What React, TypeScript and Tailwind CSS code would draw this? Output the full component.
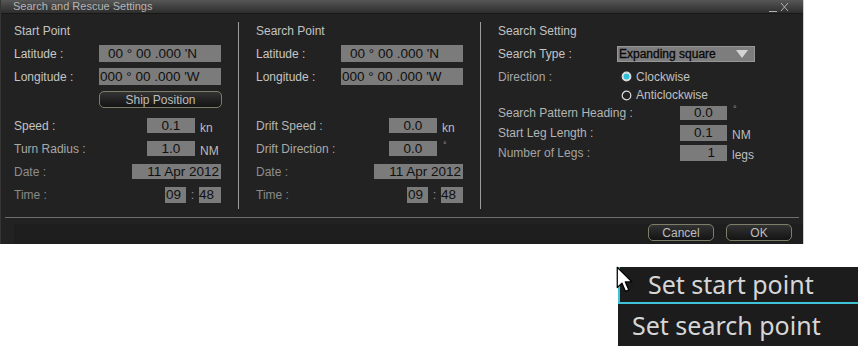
import React from "react";

const box = "bg-[#7b7b7b] text-[#101010] text-[13.5px] leading-none flex items-center";
const lbl = "text-[12px] leading-none whitespace-nowrap";

function Row({ h, children, cls = "" }: { h: string; children: React.ReactNode; cls?: string }) {
  return <div className={`flex items-center ${h} ${cls}`}>{children}</div>;
}

function Btn({ w, children }: { w: string; children: React.ReactNode }) {
  return (
    <div
      className={`${w} h-[17px] rounded-[5px] border border-[#7e7e68] bg-gradient-to-b from-[#333333] to-[#141414] flex items-center justify-center text-[12px] leading-none text-[#bdbdbd]`}
    >
      {children}
    </div>
  );
}

function PointColumn({
  title,
  showShip,
  r1,
  r2,
}: {
  title: string;
  showShip: boolean;
  r1: [string, string, string, string];
  r2: [string, string, string, string];
}) {
  return (
    <div className="flex flex-col pt-[9px]">
      <div className={`${lbl} h-[16px] flex items-center text-[#c2c2c2]`}>{title}</div>
      <div className="mt-[3px]">
        <Row h="h-[23px]">
          <div className={`${lbl} w-[85px] text-[#c8c8c8]`}>Latitude :</div>
          <div className={`${box} w-[122px] h-[17px] pl-[9px]`}>00 ° 00 .000 'N</div>
        </Row>
        <Row h="h-[23px]">
          <div className={`${lbl} w-[85px] text-[#c4c4c4]`}>Longitude :</div>
          <div className={`${box} w-[122px] h-[17px] pl-[1px]`}>000 ° 00 .000 'W</div>
        </Row>
        <Row h="h-[23px]">
          <div className="w-[85px]" />
          {showShip ? <Btn w="w-[123px]">Ship Position</Btn> : null}
        </Row>
      </div>
      <div className="mt-[3px]">
        <Row h="h-[23px]">
          <div className={`${lbl} w-[133px] ${r1[3]}`}>{r1[0]}</div>
          <div className={`${box} w-[48px] h-[15px] justify-center`}>{r1[1]}</div>
          <div className={`${lbl} ml-[5px] mt-[4px] text-[#bdbdbd]`}>{r1[2]}</div>
        </Row>
        <Row h="h-[23px]">
          <div className={`${lbl} w-[133px] ${r2[3]}`}>{r2[0]}</div>
          <div className={`${box} w-[48px] h-[15px] justify-center`}>{r2[1]}</div>
          {r2[2] === "°" ? (
            <div className="ml-[6px] mb-[6px] text-[9px] leading-none text-[#9a9a9a]">°</div>
          ) : (
            <div className={`${lbl} ml-[5px] mt-[4px] text-[#bdbdbd]`}>{r2[2]}</div>
          )}
        </Row>
        <Row h="h-[23px]">
          <div className={`${lbl} w-[118px] text-[#8e8e8e]`}>Date :</div>
          <div className={`${box} w-[89px] h-[15px] justify-end pr-[2px]`}>11 Apr 2012</div>
        </Row>
        <Row h="h-[23px]">
          <div className={`${lbl} w-[151px] text-[#8a8a8a]`}>Time :</div>
          <div className={`${box} w-[21px] h-[16px] pl-[1px]`}>09</div>
          <div className="w-[13px] text-center text-[13px] leading-none text-[#8e8e8e]">:</div>
          <div className={`${box} w-[22px] h-[16px]`}>48</div>
        </Row>
      </div>
    </div>
  );
}

function Radio({ on }: { on: boolean }) {
  return (
    <svg width="11" height="11" viewBox="0 0 11 11" className="shrink-0">
      <circle cx="5.5" cy="5.5" r="4.3" fill={on ? "#e8e8e8" : "none"} stroke="#dcdcdc" strokeWidth="1.2" />
      {on ? <circle cx="5.5" cy="5.5" r="3" fill="#2fc1d6" /> : null}
    </svg>
  );
}

export default function App() {
  return (
    <div className="w-[858px] h-[348px] bg-white overflow-hidden font-['Liberation_Sans',Arial,sans-serif]">
      {/* Dialog */}
      <div className="w-[804px] h-[244px] flex flex-col bg-[#222222] border-r border-[#cfcfcf] border-l border-l-[#353535]">
        {/* Title bar */}
        <div className="h-[14px] shrink-0 flex items-center bg-gradient-to-b from-[#575757] to-[#2d2d2d] border-b border-[#181818]">
          <div className="pl-[12px] text-[11px] leading-none text-[#b4b4b4] whitespace-nowrap">
            Search and Rescue Settings
          </div>
          <div className="ml-auto mr-[8px] flex items-center">
            <svg width="26" height="13" viewBox="0 0 26 13">
              <line x1="0" y1="11.5" x2="8" y2="11.5" stroke="#b0b0b0" strokeWidth="1" />
              <line x1="12" y1="3" x2="19" y2="11" stroke="#b0b0b0" strokeWidth="1" />
              <line x1="19" y1="3" x2="12" y2="11" stroke="#b0b0b0" strokeWidth="1" />
            </svg>
          </div>
        </div>

        {/* Body */}
        <div className="h-[203px] shrink-0 flex">
          <div className="w-[237px] pl-[13px]">
            <PointColumn
              title="Start Point"
              showShip
              r1={["Speed :", "0.1", "kn", "text-[#c2c2c2]"]}
              r2={["Turn Radius :", "1.0", "NM", "text-[#a8a8a8]"]}
            />
          </div>
          <div className="w-px bg-[#9c9c9c] mt-[8px] h-[187px]" />
          <div className="w-[241px] pl-[17px]">
            <PointColumn
              title="Search Point"
              showShip={false}
              r1={["Drift Speed :", "0.0", "kn", "text-[#b6b6b6]"]}
              r2={["Drift Direction :", "0.0", "°", "text-[#a8a8a8]"]}
            />
          </div>
          <div className="w-px bg-[#9c9c9c] mt-[8px] h-[187px]" />
          <div className="flex-1 pl-[17px] pt-[9px] flex flex-col">
            <div className={`${lbl} h-[16px] flex items-center text-[#c2c2c2]`}>Search Setting</div>
            <Row h="h-[22px]" cls="mt-[4px]">
              <div className={`${lbl} w-[119px] text-[#c4c4c4]`}>Search Type :</div>
              <div className="w-[138px] h-[16px] bg-[#7d7d7d] border border-[#979797] flex items-center pl-[1px] text-[12px] leading-none text-[#080808]">
                <span className="[-webkit-text-stroke:0.3px_#080808]">Expanding square</span>
                <svg width="12" height="9" viewBox="0 0 12 9" className="ml-auto mr-[6px]">
                  <polygon points="0,0 12,0 6,8" fill="#d4d4d4" />
                </svg>
              </div>
            </Row>
            <Row h="h-[21px]" cls="mt-[1px]">
              <div className={`${lbl} w-[123px] text-[#a6a6a6]`}>Direction :</div>
              <Radio on />
              <div className={`${lbl} ml-[4px] text-[#c0c0c0]`}>Clockwise</div>
            </Row>
            <Row h="h-[16px]">
              <div className="w-[123px]" />
              <Radio on={false} />
              <div className={`${lbl} ml-[4px] text-[#c0c0c0]`}>Anticlockwise</div>
            </Row>
            <Row h="h-[19px]">
              <div className={`${lbl} w-[182px] text-[#b4b4b4]`}>Search Pattern Heading :</div>
              <div className={`${box} w-[47px] h-[14px] justify-center`}>0.0</div>
              <div className="ml-[6px] mb-[6px] text-[9px] leading-none text-[#9a9a9a]">°</div>
            </Row>
            <Row h="h-[21px]">
              <div className={`${lbl} w-[182px] text-[#b4b4b4]`}>Start Leg Length :</div>
              <div className={`${box} w-[47px] h-[16px] justify-center`}>0.1</div>
              <div className={`${lbl} ml-[5px] mt-[4px] text-[#bdbdbd]`}>NM</div>
            </Row>
            <Row h="h-[19px]">
              <div className={`${lbl} w-[182px] text-[#a4a4a4]`}>Number of Legs :</div>
              <div className={`${box} w-[47px] h-[16px] justify-end pr-[12px]`}>1</div>
              <div className={`${lbl} ml-[5px] mt-[4px] text-[#bdbdbd]`}>legs</div>
            </Row>
          </div>
        </div>

        {/* Separator */}
        <div className="h-px shrink-0 mx-[4px] bg-[#6e6e6e]" />

        {/* Footer */}
        <div className="flex-1 flex pl-[13px] pt-[6px]">
          <div className="flex-1 bg-[#1e1e1e] flex justify-end items-start gap-[12px] pr-[11px]">
            <Btn w="w-[66px]">Cancel</Btn>
            <Btn w="w-[66px]">OK</Btn>
          </div>
        </div>
      </div>

      {/* Popup menu */}
      <div className="relative ml-[618px] mt-[23px] w-[240px] flex flex-col font-['Noto_Sans',sans-serif]">
        <div className="h-[37px] bg-[#1c1c1c] border-l-2 border-b-2 border-[#3cc3d6] flex items-center pl-[28px] text-[25px] leading-none text-[#d6d6d6] whitespace-nowrap">
          Set start point
        </div>
        <div className="h-[42px] bg-[#1c1c1c] flex items-center pl-[14px] text-[25px] leading-none text-[#d6d6d6] whitespace-nowrap">
          Set search point
        </div>
        <svg
          width="19"
          height="27"
          viewBox="0 0 12 17"
          className="absolute left-[-2px] top-[-1px]"
        >
          <path d="M0.8 0.8 L0.8 13.6 L3.8 10.8 L6 16 L8.1 15.1 L5.9 10 L10 10 Z" fill="#ffffff" stroke="#000000" strokeWidth="0.8" strokeLinejoin="round" />
        </svg>
      </div>
    </div>
  );
}
